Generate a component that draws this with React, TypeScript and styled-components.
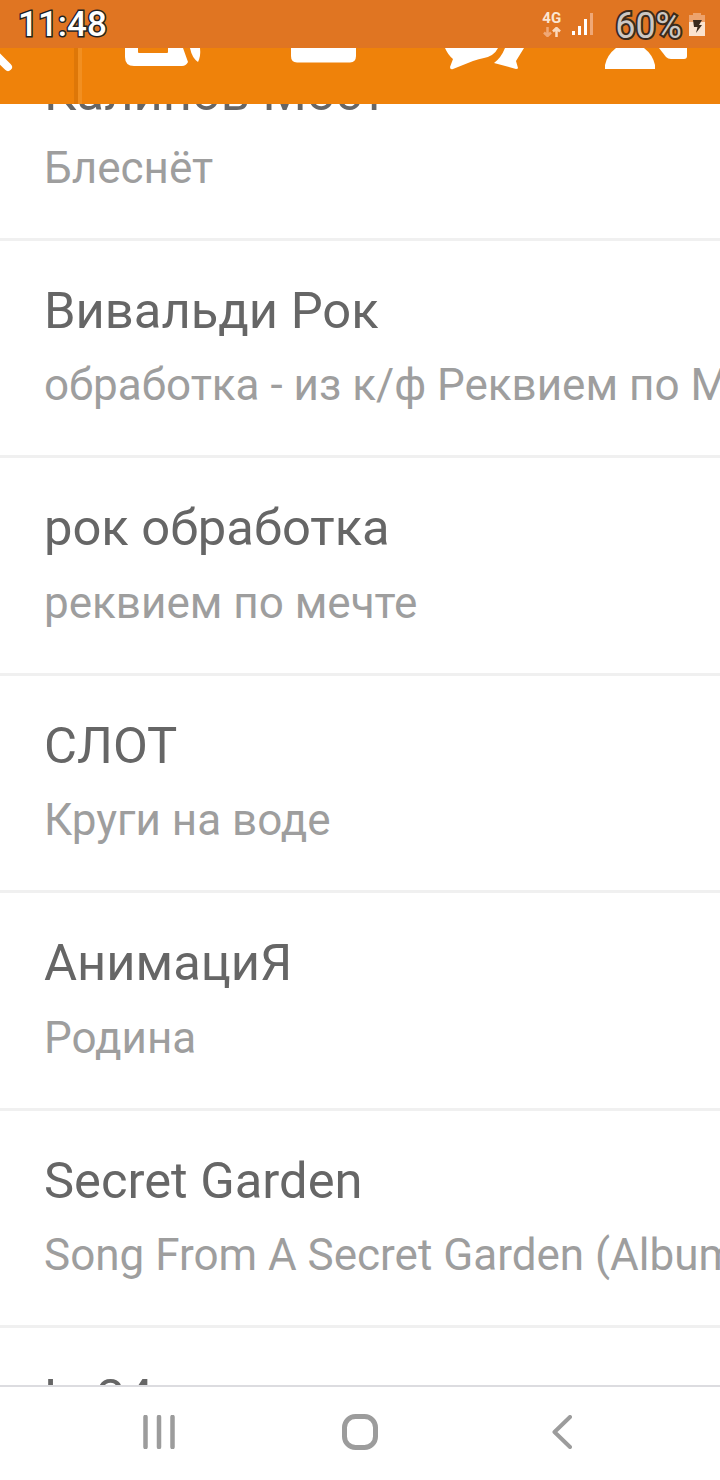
import styled, { createGlobalStyle } from 'styled-components';

const GlobalStyle = createGlobalStyle`
  html, body {
    margin: 0;
    padding: 0;
    background: #fff;
  }
`;

const Screen = styled.div`
  width: 720px;
  height: 1480px;
  display: flex;
  flex-direction: column;
  overflow: hidden;
  background: #fff;
  font-family: Roboto, "Noto Sans", sans-serif;
`;

const StatusBar = styled.div`
  flex: none;
  height: 48px;
  display: flex;
  align-items: center;
  padding: 0 15px 0 18px;
  background: #e07522;
`;

const Clock = styled.span`
  font-size: 35px;
  font-weight: 500;
  color: #fff;
  -webkit-text-stroke: 3px #222;
  paint-order: stroke fill;
  margin-right: auto;
`;

const Percent = styled.span`
  font-size: 36px;
  color: #cdc8c3;
  -webkit-text-stroke: 4px #3a2a1c;
  paint-order: stroke fill;
  margin: 4px 7px 0 22px;
`;

const NetworkBlock = styled.div`
  display: flex;
  flex-direction: column;
  align-items: center;
  gap: 2px;
  margin-right: 11px;
`;

const NetworkLabel = styled.span`
  font-size: 15px;
  line-height: 13px;
  font-weight: 700;
  color: #fbe6d2;
`;

const AppBar = styled.div`
  flex: none;
  height: 56px;
  display: flex;
  align-items: flex-start;
  background: #ef820a;
  overflow: hidden;
`;

const BackSlot = styled.div`
  width: 74px;
  flex: none;
`;

const BarDivider = styled.div`
  width: 8px;
  height: 56px;
  flex: none;
  background: linear-gradient(90deg, #de7708 45%, #f28f20 45%);
`;

const TabSlot = styled.div`
  width: 161px;
  flex: none;
  display: flex;
  justify-content: center;
`;

const List = styled.div`
  flex: 1;
  min-height: 0;
  overflow: hidden;
`;

const ScrolledRows = styled.div`
  margin-top: -81px;
`;

const Row = styled.div`
  height: 214.5px;
  box-sizing: content-box;
  padding-left: 44px;
  border-bottom: 3px solid #f0f0f0;
  white-space: nowrap;
  overflow: hidden;
`;

const Title = styled.div`
  font-size: 50.7px;
  line-height: 54px;
  color: #666;
  padding-top: 43px;
`;

const Subtitle = styled.div`
  font-size: 44px;
  line-height: 48px;
  color: #9e9e9e;
  margin-top: 23.5px;
`;

const NavBar = styled.div`
  flex: none;
  box-sizing: border-box;
  height: 95px;
  padding-bottom: 3px;
  border-top: 2px solid #dcdce0;
  display: flex;
  align-items: center;
  background: #fff;
`;

const NavSlot = styled.div<{ $width: number }>`
  width: ${({ $width }) => $width}px;
  flex: none;
  display: flex;
  justify-content: flex-end;
`;

const tracks: [string, string][] = [
  ['Калинов Мост', 'Блеснёт'],
  ['Вивальди Рок', 'обработка - из к/ф Реквием по Мечте'],
  ['рок обработка', 'реквием по мечте'],
  ['СЛОТ', 'Круги на воде'],
  ['АнимациЯ', 'Родина'],
  ['Secret Garden', 'Song From A Secret Garden (Album)'],
  ['Lx24', 'Пошёл'],
];

export default function App() {
  return (
    <Screen>
      <GlobalStyle />
      <StatusBar>
        <Clock>11:48</Clock>
        <NetworkBlock>
          <NetworkLabel>4G</NetworkLabel>
          <svg width="18" height="10" viewBox="0 0 18 10">
            <path d="M4.500 0v9M1 5.500l3.500 3.500 3.500-3.500" fill="none" stroke="#f0a877" strokeWidth="2.500" />
            <path d="M13.500 10V1M10 4.500L13.500 1 17 4.500" fill="none" stroke="#fbd9bd" strokeWidth="2.500" />
          </svg>
        </NetworkBlock>
        <svg width="21" height="22" viewBox="0 0 21 22">
          <rect x="0" y="18" width="3" height="4" fill="#fff" />
          <rect x="6" y="13" width="3" height="9" fill="#fff" />
          <rect x="12" y="6" width="3" height="16" fill="#fff" />
          <rect x="18" y="0" width="3" height="22" fill="#f0a877" />
        </svg>
        <Percent>60%</Percent>
        <svg width="16" height="23" viewBox="0 0 16 23">
          <path d="M4 0h8v2h4v7H0V2h4z" fill="#eda36d" />
          <path d="M0 9h16v14H0z" fill="#fbe3cf" />
          <path d="M4 7h9l-3 5h3l-6 8 1.500-6H5z" fill="#3a2a1c" />
        </svg>
      </StatusBar>
      <AppBar>
        <BackSlot>
          <svg width="14" height="25" viewBox="0 0 14 25">
            <path d="M-2 9L8 19" stroke="#fff" strokeWidth="8" strokeLinecap="round" fill="none" />
          </svg>
        </BackSlot>
        <BarDivider />
        <TabSlot>
          <svg width="76" height="19" viewBox="0 0 76 19">
            <path d="M0 0h13v4q0 1 1 1h28q1 0 1-1V0h15l5 14q-2 4-6 4H9q-9 0-9-9z" fill="#fff" />
            <path d="M65 0h10q1 8-2 14q-6-4-8-14z" fill="#fff" />
          </svg>
        </TabSlot>
        <TabSlot>
          <svg width="65" height="15" viewBox="0 0 65 15">
            <path d="M0 0h65v8q0 6-6 6.500H6q-6 0-6-6.500z" fill="#fff" />
          </svg>
        </TabSlot>
        <TabSlot>
          <svg width="80" height="22" viewBox="0 0 80 22">
            <path d="M0 0h53q-4 8-14 10q-5 1-11 3L8 21q-3 1-3-2l3-8Q3 7 0 0z" fill="#fff" />
            <path d="M60 0h19l-8 13 2 7q0 1-2 1L49 15q7-5 11-15z" fill="#fff" />
          </svg>
        </TabSlot>
        <TabSlot>
          <svg width="82" height="22" viewBox="0 0 82 22">
            <path d="M0 21v-4Q2 7 11 0h28q9 7 11 17v4z" fill="#fff" />
            <path d="M54 0h28v8q0 3-3 3H66q-3 0-5-2z" fill="#fff" />
          </svg>
        </TabSlot>
      </AppBar>
      <List>
        <ScrolledRows>
          {tracks.map(([title, subtitle]) => (
            <Row key={title}>
              <Title>{title}</Title>
              <Subtitle>{subtitle}</Subtitle>
            </Row>
          ))}
        </ScrolledRows>
      </List>
      <NavBar>
        <NavSlot $width={175}>
          <svg width="32" height="34" viewBox="0 0 32 34">
            <path d="M2.500 2v30M16 2v30M29.500 2v30" stroke="#9c9c9c" strokeWidth="4.500" strokeLinecap="round" />
          </svg>
        </NavSlot>
        <NavSlot $width={203}>
          <svg width="36" height="36" viewBox="0 0 36 36">
            <rect x="2.500" y="2.500" width="31" height="31" rx="11" fill="none" stroke="#9c9c9c" strokeWidth="5" />
          </svg>
        </NavSlot>
        <NavSlot $width={194}>
          <svg width="20" height="34" viewBox="0 0 20 34">
            <path d="M18 2L2.500 17 18 32" fill="none" stroke="#9c9c9c" strokeWidth="4" strokeLinecap="round" strokeLinejoin="round" />
          </svg>
        </NavSlot>
      </NavBar>
    </Screen>
  );
}
